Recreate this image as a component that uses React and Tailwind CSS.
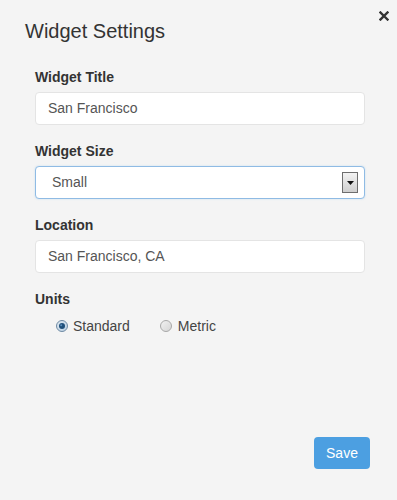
import { useState } from 'react';

const FIELD = 'h-[33px] w-full rounded-[4px] bg-white text-[14px] text-[#555] outline-none';

function Radio({ checked }) {
    return (
        <svg width="12" height="12" viewBox="0 0 12 12" className="flex-shrink-0">
            <defs>
                <linearGradient id={checked ? 'rg-on' : 'rg-off'} x1="0" y1="0" x2="1" y2="1">
                    <stop offset="0" stopColor={checked ? '#dfe9f2' : '#f2f2f2'} />
                    <stop offset="1" stopColor={checked ? '#b9cfe2' : '#d4d4d4'} />
                </linearGradient>
            </defs>
            <circle cx="6" cy="6" r="5.5" fill={`url(#${checked ? 'rg-on' : 'rg-off'})`} stroke={checked ? '#6f8aa3' : '#a8a8a8'} strokeWidth="1" />
            {checked && <circle cx="6" cy="6" r="3" fill="#1f4f7a" />}
            {checked && <circle cx="5.2" cy="5.2" r="1" fill="#5d8fbc" />}
        </svg>
    );
}

export default function App() {
    const [units, setUnits] = useState('standard');

    return (
        <div className="relative w-[397px] h-[500px] bg-[#f4f4f4] flex flex-col text-[#333]" style={{ fontFamily: '"Liberation Sans", Arial, sans-serif' }}>
            {/* Close */}
            <button className="absolute top-[11px] right-[8px] w-[10px] h-[10px] flex items-center justify-center">
                <svg width="10" height="10" viewBox="0 0 10 10">
                    <path d="M1.5 1.5 L8.5 8.5 M8.5 1.5 L1.5 8.5" stroke="#333" strokeWidth="2.4" strokeLinecap="square" />
                </svg>
            </button>

            {/* Header */}
            <h2 className="pl-[25px] pt-[17px] text-[20px] leading-[28px] text-[#333] font-normal">Widget Settings</h2>

            {/* Form */}
            <div className="pl-[35px] pr-[32px] mt-[22px] flex flex-col">
                <label className="text-[14px] leading-[20px] font-bold">Widget Title</label>
                <div className={`${FIELD} mt-[5px] border border-[#e4e4e4] flex items-center pl-[12px]`}>San Francisco</div>

                <label className="mt-[16px] text-[14px] leading-[20px] font-bold">Widget Size</label>
                <div className={`${FIELD} mt-[5px] border border-[#8fbbe4] flex items-center pl-[16px] pr-[6px] shadow-[0_0_2px_rgba(102,175,233,0.35)]`}>
                    <span className="flex-1">Small</span>
                    <span className="w-[16px] h-[21px] border border-[#6e6e6e] bg-gradient-to-b from-[#f3f3f3] to-[#cfcfcf] flex items-center justify-center">
                        <svg width="7" height="4" viewBox="0 0 7 4"><path d="M0 0 H7 L3.5 4 Z" fill="#111" /></svg>
                    </span>
                </div>

                <label className="mt-[16px] text-[14px] leading-[20px] font-bold">Location</label>
                <div className={`${FIELD} mt-[5px] border border-[#e4e4e4] flex items-center pl-[12px]`}>San Francisco, CA</div>

                <label className="mt-[16px] text-[14px] leading-[20px] font-bold">Units</label>
                <div className="mt-[7px] pl-[21px] flex items-center text-[14px] leading-[20px] text-[#444]">
                    <button onClick={() => setUnits('standard')} className="flex items-center gap-[5px]">
                        <Radio checked={units === 'standard'} />
                        <span>Standard</span>
                    </button>
                    <button onClick={() => setUnits('metric')} className="ml-[30px] flex items-center gap-[6px]">
                        <Radio checked={units === 'metric'} />
                        <span>Metric</span>
                    </button>
                </div>
            </div>

            <div className="flex-1" />

            {/* Footer */}
            <div className="flex justify-end pr-[27px] pb-[31px]">
                <button className="w-[56px] h-[32px] rounded-[4px] bg-[#4c9fe1] text-white text-[14px]">Save</button>
            </div>
        </div>
    );
}
